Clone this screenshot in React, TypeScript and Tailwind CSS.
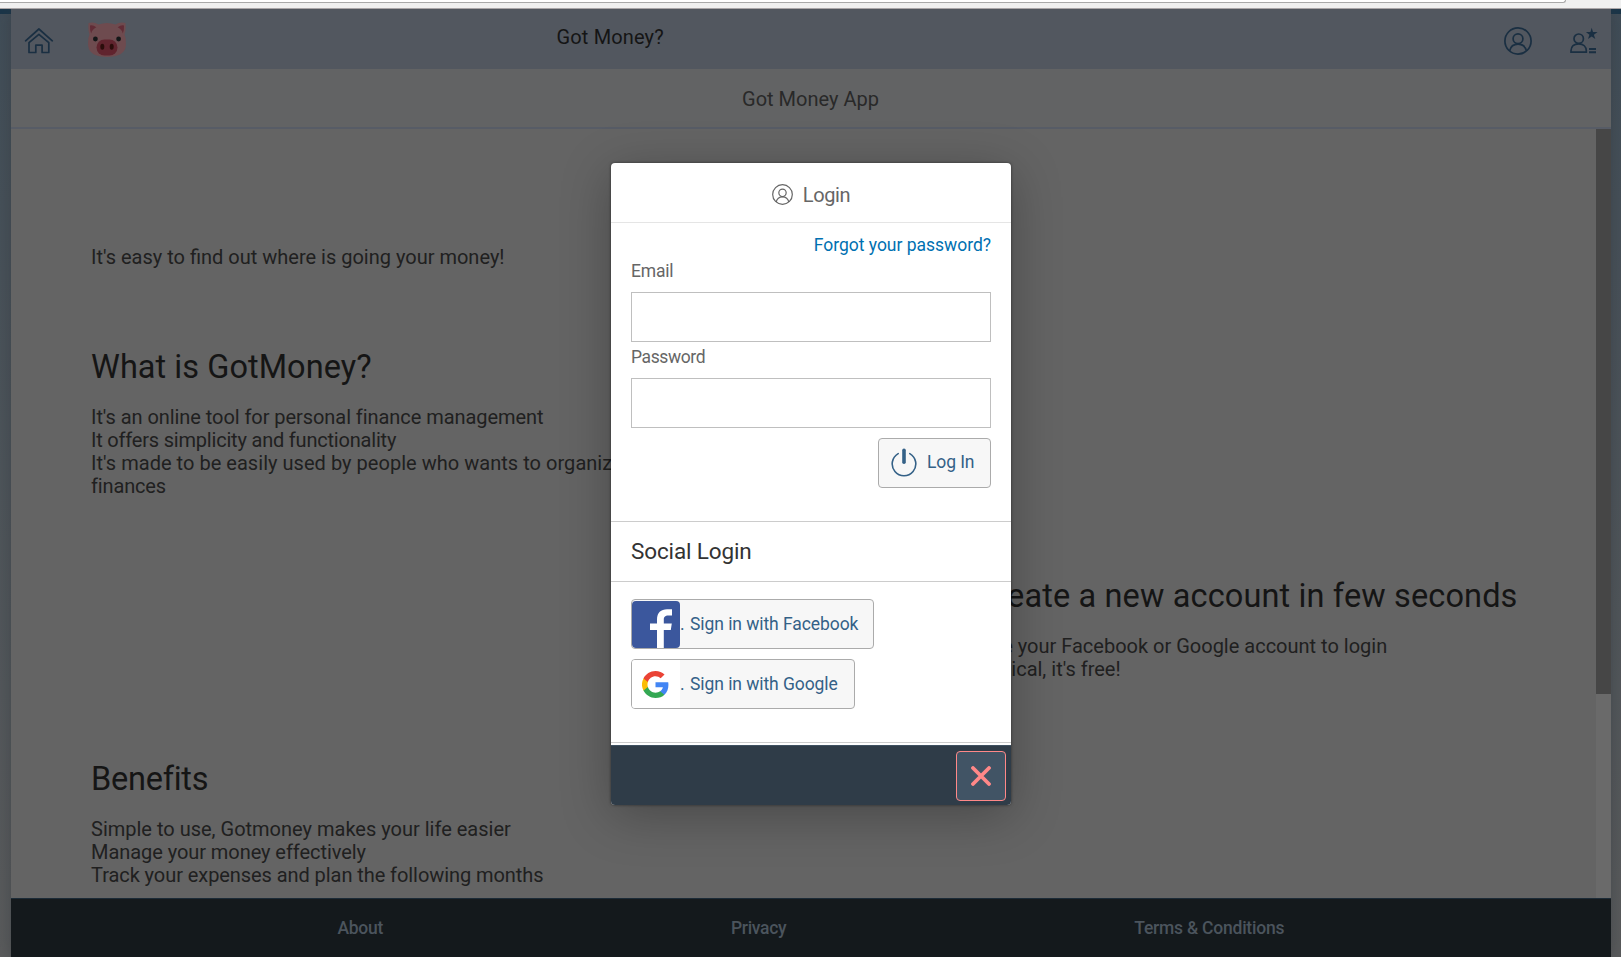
import type { ReactNode } from "react";

function HomeIcon() {
  return (
    <svg width="30" height="28" viewBox="0 0 30 28" fill="none" stroke="#1a2f42" strokeWidth="1.7" strokeLinejoin="round" strokeLinecap="round">
      <path d="M1.600 13.800 14.900 2l13.400 11.800" />
      <path d="M14.900 7.300 5 15.600v9.900h6.800v-7.300h6.300v7.300h6.700v-9.900z" />
    </svg>
  );
}

function PigIcon() {
  return (
    <svg width="38" height="36" viewBox="0 0 38 36">
      <path d="M0.600 1Q6-.5 10.500 2.500Q19-.5 27.500 2.500Q32-.5 37.400 1Q38.200 8 36.500 12.500Q38.300 16 37.800 24Q36.500 34.800 19 35Q1.500 34.800.2 24Q-.3 16 1.500 12.500Q-.2 8 .600 1Z" fill="#6e4b4f" />
      <path d="M2 3.500Q5 2.700 8.300 5.300Q4 7.500 3.200 11.500Q1.700 7.500 2 3.500ZM36 3.500Q33 2.700 29.700 5.300Q34 7.500 34.800 11.500Q36.300 7.500 36 3.500Z" fill="#612c36" />
      <rect x="8.500" y="17.500" width="21" height="16" rx="8" fill="#60242e" />
      <ellipse cx="14.300" cy="24.800" rx="2" ry="3" fill="#2a0d0b" />
      <ellipse cx="23.700" cy="24.800" rx="2" ry="3" fill="#2a0d0b" />
      <circle cx="7.400" cy="17" r="2.400" fill="#141718" />
      <circle cx="30.600" cy="17" r="2.400" fill="#141718" />
    </svg>
  );
}

function AccountIcon({ size, color, stroke }: { size: number; color: string; stroke: number }) {
  return (
    <svg width={size} height={size} viewBox="0 0 28 28" fill="none" stroke={color} strokeWidth={stroke}>
      <circle cx="14" cy="14" r="13.100" />
      <circle cx="14" cy="11.800" r="4.900" />
      <path d="M5.600 24C6.500 20 9.500 17.200 14 17.200S21.500 20 22.400 24" />
    </svg>
  );
}

function RegisterIcon() {
  return (
    <svg width="30" height="28" viewBox="0 0 30 28" fill="none" stroke="#1a2f42" strokeWidth="1.7">
      <circle cx="9.700" cy="11.700" r="4.700" />
      <path d="M2 25.200v-1.500c0-4 3-6.900 7.700-6.900s7.600 2.900 7.600 6.900v1.500z" />
      <path d="M20 22h7M20 25.200h7" strokeWidth="2" />
      <path d="M22.700 0.800 24 5h4.600l-3.700 2.800 1.400 4.300-3.600-2.600-3.700 2.600 1.400-4.300L16.900 5h4.500z" fill="#1a2f42" stroke="none" />
    </svg>
  );
}

function PowerIcon() {
  return (
    <svg className="-mt-px" width="26" height="29" viewBox="0 0 26 29" fill="none" stroke="#346187" strokeLinecap="round">
      <path d="M7.200 5.600a11.800 11.800 0 1 0 11.600 0" strokeWidth="1.600" />
      <path d="M13 2.200v12" strokeWidth="3.600" />
    </svg>
  );
}

function FacebookLogo() {
  return (
    <svg width="48" height="47" viewBox="0 0 48 47">
      <rect width="48" height="47" rx="4" fill="#3b579d" />
      <path d="M25 47V29h-7v-6.500h7v-4c0-6.800 4-10.300 10-10.300h5v6.300h-3.500c-3.700 0-4.700 1.600-4.700 4.300v3.700h8l-1 6.500h-7v18z" fill="#fff" />
    </svg>
  );
}

function GoogleLogo() {
  return (
    <svg width="27" height="27" viewBox="0 0 48 48">
      <path fill="#4285f4" d="M47 24.500c0-1.600-.2-3.200-.4-4.500H24v9h13.100c-.6 3-2.300 5.500-4.900 7.200v6h7.800c4.500-4.200 7-10.300 7-17.700z" />
      <path fill="#34a853" d="M24 48c6.500 0 12-2.100 15.900-5.800l-7.700-6c-2.200 1.500-4.900 2.300-8.200 2.300-6.300 0-11.600-4.200-13.500-9.900H2.600v6.200C6.500 42.600 14.600 48 24 48z" />
      <path fill="#fbbc05" d="M10.500 28.600a14.500 14.500 0 0 1 0-9.200v-6.200H2.600a24 24 0 0 0 0 21.600z" />
      <path fill="#ea4335" d="M24 9.500c3.500 0 6.700 1.200 9.200 3.600l6.900-6.900C35.900 2.400 30.500 0 24 0 14.600 0 6.500 5.400 2.600 13.200l7.900 6.200C12.400 13.700 17.700 9.500 24 9.500z" />
    </svg>
  );
}

function Block({ title, titleClass = "", children }: { title: string; titleClass?: string; children: ReactNode }) {
  return (
    <section className="whitespace-nowrap">
      <h2 className={`mb-[19px] text-[32.5px] leading-10 text-[#151515] ${titleClass}`}>{title}</h2>
      {children}
    </section>
  );
}

function SocialButton({ logo, label, width }: { logo: ReactNode; label: string; width: string }) {
  return (
    <button className={`flex h-[50px] items-center overflow-hidden rounded-[4px] border border-[#ababab] bg-[#f7f7f7] tracking-[-0.07px] text-[#346187] ${width}`}>
      <span className="flex h-full w-12 shrink-0 items-end justify-center">{logo}</span>
      <span className="w-[10px] shrink-0 text-left">.</span>
      <span className="whitespace-nowrap">{label}</span>
    </button>
  );
}

function LoginDialog() {
  return (
    <div className="absolute left-[611px] top-[163px] flex h-[642px] w-[400px] flex-col overflow-hidden rounded-[4px] bg-white text-[17.5px] leading-6 tracking-[-0.1px] shadow-[0_10px_50px_rgba(0,0,0,0.28),0_0_3px_rgba(0,0,0,0.5)]">
      <header className="flex h-[60px] shrink-0 items-center justify-center gap-[10px] border-b border-[#e5e5e5] pt-1 text-[20px] tracking-[-0.4px] text-[#666]">
        <AccountIcon size={21} color="#666666" stroke={1.6} />
        <h1>Login</h1>
      </header>
      <form className="flex h-[298px] shrink-0 flex-col px-5 pt-[10px] text-[#666]">
        <a className="self-end tracking-[-0.02px] text-[#0070b1]">Forgot your password?</a>
        <label className="mt-[2px] tracking-[-0.2px]">Email</label>
        <input className="mt-[9px] h-[50px] shrink-0 border border-[#bfbfbf] bg-white" />
        <label className="mt-[3px] tracking-[-0.4px]">Password</label>
        <input className="mt-[9px] h-[50px] shrink-0 border border-[#bfbfbf] bg-white" />
        <button type="button" className="mt-[10px] flex h-[50px] w-[113px] shrink-0 items-center gap-[10px] self-end rounded-[4px] border border-[#ababab] bg-[#f7f7f7] pl-3 text-[#346187]">
          <PowerIcon />
          <span className="-mt-[2px]">Log In</span>
        </button>
      </form>
      <h2 className="h-[61px] shrink-0 border-y border-[#ccc] px-5 text-[22.5px] leading-[58px] tracking-[-0.13px] text-[#333]">Social Login</h2>
      <div className="flex h-[161px] shrink-0 flex-col gap-[10px] border-b border-[#ccc] px-5 pt-[17px]">
        <SocialButton width="w-[243px]" label="Sign in with Facebook" logo={<FacebookLogo />} />
        <SocialButton
          width="w-[224px]"
          label="Sign in with Google"
          logo={<span className="flex h-full w-12 items-center justify-center bg-white pr-px"><GoogleLogo /></span>}
        />
      </div>
      <footer className="mt-auto flex h-[60px] shrink-0 items-start justify-end border-t border-[#3f5161] bg-[#2f3c48] pr-[5px] pt-[5px]">
        <button className="flex size-[50px] items-center justify-center rounded-[4px] border border-[#ff8888] bg-[#415465]">
          <svg width="20" height="20" viewBox="0 0 20 20" fill="none" stroke="#ff8888" strokeWidth="3.800" strokeLinecap="round">
            <path d="m2 2 16 16M18 2 2 18" />
          </svg>
        </button>
      </footer>
    </div>
  );
}

export default function App() {
  return (
    <div className="relative flex h-[957px] w-[1621px] flex-col overflow-hidden bg-[#505356] font-[Roboto,sans-serif] text-[20px] leading-[23px] text-[#202020]">
      <div className="relative h-[9px] shrink-0 border-b border-[#aaa6a8] bg-[#f0f0f0]">
        <div className="h-[3px] w-[1566px] rounded-br-[3px] border-b border-r border-[#a9a9a9] bg-white" />
      </div>
      <div className="flex min-h-0 grow flex-col overflow-hidden bg-linear-to-b from-[#414d58] to-[#5a5b5c]">
        <div className="-mb-[5px] h-[5px] shrink-0 bg-[#1a3549]" />
        <div className="mx-auto flex min-h-0 w-[1600px] grow flex-col shadow-[0_0_14px_rgba(50,55,60,0.5)]">
          <header className="flex h-[60px] shrink-0 items-center bg-[#52575f]">
            <div className="ml-[13px] mt-1"><HomeIcon /></div>
            <div className="ml-[34px] mt-[2px]"><PigIcon /></div>
            <h1 className="mb-1 ml-[431px] tracking-[0.15px] text-[#151515]">Got Money?</h1>
            <div className="ml-auto mt-1"><AccountIcon size={28} color="#1a2f42" stroke={1.7} /></div>
            <div className="ml-[37px] mr-3 mt-1"><RegisterIcon /></div>
          </header>
          <div className="h-[60px] shrink-0 border-b-2 border-[#575c66] bg-[#626364] text-center leading-[60px] text-[#292929]">Got Money App</div>
          <div className="flex min-h-0 grow bg-[#646464]">
            <main className="flex grow flex-col gap-[78px] overflow-hidden pl-[80.5px] pr-[78px] pt-[117px]">
              <p>It's easy to find out where is going your money!</p>
              <Block title="What is GotMoney?" titleClass="tracking-[0.05px]">
                <p className="tracking-[-0.06px]">It's an online tool for personal finance management</p>
                <p className="tracking-[-0.2px]">It offers simplicity and functionality</p>
                <p className="tracking-[0.035px]">It's made to be easily used by people who wants to organize their</p>
                <p className="tracking-[-0.15px]">finances</p>
              </Block>
              <div className="self-end">
                <Block title="Create a new account in few seconds" titleClass="tracking-[0.13px]">
                  <p className="pl-1">Use your Facebook or Google account to login</p>
                  <p className="pl-[3px]">Logical, it's free!</p>
                </Block>
              </div>
              <Block title="Benefits" titleClass="tracking-[-0.25px]">
                <p>Simple to use, Gotmoney makes your life easier</p>
                <p className="tracking-[-0.06px]">Manage your money effectively</p>
                <p className="tracking-[-0.07px]">Track your expenses and plan the following months</p>
              </Block>
            </main>
            <div className="w-[15px] shrink-0 bg-[#6a6a6a]">
              <div className="h-[565px] bg-[#464646]" />
            </div>
          </div>
          <footer className="flex h-[59px] shrink-0 items-start border-t border-[#1c2b37] bg-[#14191c] text-[17.5px] font-medium leading-[58px] tracking-[-0.3px] text-[#4b545d]">
            <a className="ml-[327px]">About</a>
            <a className="ml-[348px]">Privacy</a>
            <a className="ml-[348px] tracking-[-0.23px]">Terms &amp; Conditions</a>
          </footer>
        </div>
      </div>
      <LoginDialog />
    </div>
  );
}
